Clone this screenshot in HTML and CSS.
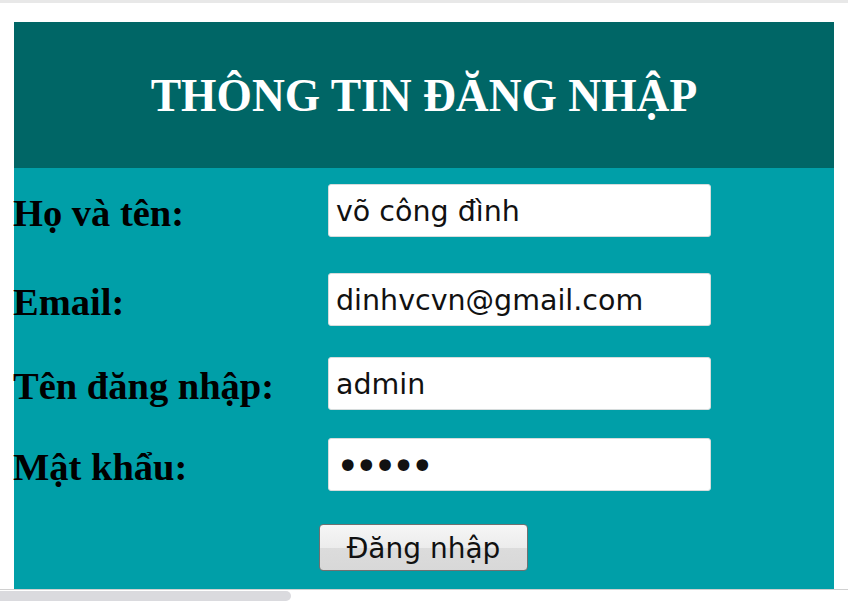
FILE: index.html
```html
<!DOCTYPE html>
<html lang="vi">
<head>
<meta charset="utf-8">
<title>Thông tin đăng nhập</title>
<link rel="stylesheet" href="styles.css">
</head>
<body>
<div class="topbar"></div>
<div class="page">
  <form class="login">
    <div class="login-head">
      <h1 class="login-title">THÔNG TIN ĐĂNG NHẬP</h1>
    </div>
    <div class="login-body">
      <div class="row row-1">
        <label class="label" for="name">Họ và tên:</label>
        <input class="field" id="name" type="text" value="võ công đình">
      </div>
      <div class="row row-2">
        <label class="label" for="email">Email:</label>
        <input class="field" id="email" type="text" value="dinhvcvn@gmail.com">
      </div>
      <div class="row row-3">
        <label class="label" for="user">Tên đăng nhập:</label>
        <input class="field" id="user" type="text" value="admin">
      </div>
      <div class="row row-4">
        <label class="label" for="pass">Mật khẩu:</label>
        <input class="field field-pass" id="pass" type="password" value="12345">
      </div>
      <div class="actions">
        <button class="btn" type="button">Đăng nhập</button>
      </div>
    </div>
  </form>
</div>
<div class="hscroll"><div class="hscroll-thumb"></div></div>
</body>
</html>
```

FILE: styles.css
```css
html, body {
  margin: 0;
  padding: 0;
  background: #ffffff;
  height: 601px;
  overflow: hidden;
}

body {
  display: flex;
  flex-direction: column;
}

.topbar {
  height: 4px;
  background: #e8e8e8;
}

.page {
  padding: 19px 0 0 14px;
}

.login {
  width: 820px;
  margin: 0;
}

.login-head {
  height: 146px;
  background: #006666;
  display: flex;
  align-items: center;
  justify-content: center;
}

.login-title {
  margin: 0;
  font-family: "Liberation Serif", "Times New Roman", serif;
  font-weight: bold;
  font-size: 45.5px;
  color: #ffffff;
  line-height: 1;
  padding-top: 2px;
}

.login-body {
  background: #009fa8;
  height: 421px;
  padding-top: 16px;
  box-sizing: border-box;
  display: flex;
  flex-direction: column;
}

.row {
  display: flex;
  align-items: center;
  height: 53px;
}

.row-2 { margin-top: 36px; }
.row-3 { margin-top: 31px; }
.row-4 { margin-top: 28px; }

.label {
  width: 315px;
  margin-left: -1px;
  font-family: "Liberation Serif", "Times New Roman", serif;
  font-weight: bold;
  font-size: 38.5px;
  color: #000000;
  padding-top: 5px;
}

.field {
  width: 383px;
  height: 53px;
  box-sizing: border-box;
  border: 1px solid #d6dcdc;
  border-radius: 3px;
  background: #ffffff;
  padding: 2px 7px 0;
  font-family: "DejaVu Sans", Verdana, sans-serif;
  font-size: 28.5px;
  color: #111111;
  outline: none;
}

.field-pass {
  font-size: 40px;
  letter-spacing: -5px;
}

.actions {
  display: flex;
  justify-content: center;
  margin-top: 33px;
}

.btn {
  width: 209px;
  height: 47px;
  box-sizing: border-box;
  border: 1px solid #707070;
  border-radius: 4px;
  background: linear-gradient(#f6f6f6 0%, #ececec 50%, #dcdcdc 51%, #d8d8d8 100%);
  font-family: "DejaVu Sans", Verdana, sans-serif;
  font-size: 28px;
  color: #111111;
  padding: 2px 0 0;
  margin-left: -1px;
}

.hscroll {
  margin-top: 0;
  border-top: 1px solid #d0d0d0;
  height: 10px;
  background: #ffffff;
  padding-top: 1px;
}

.hscroll-thumb {
  width: 291px;
  height: 10px;
  background: #dadade;
  border-radius: 0 5px 5px 0;
}
```
